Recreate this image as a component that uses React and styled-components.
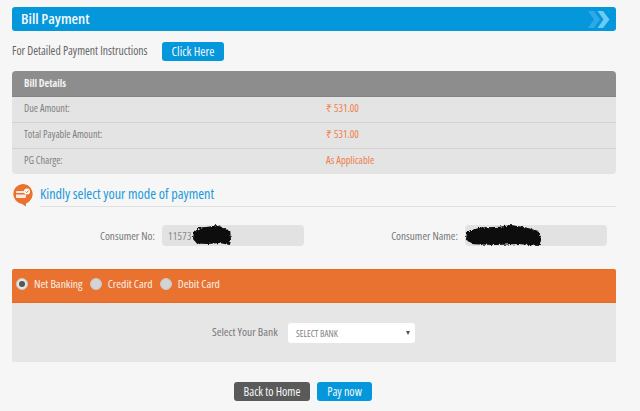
import React from 'react';
import styled, { createGlobalStyle } from 'styled-components';

const Global = createGlobalStyle`
  html, body { margin: 0; padding: 0; background: #f6f6f6; }
  body { font-family: "Open Sans", sans-serif; font-stretch: 75%; width: 640px; height: 411px; overflow: hidden; }
`;
const Page = styled.div`
  width: 604px; margin-left: 12px; padding-top: 7px; display: flex; flex-direction: column;
`;
const Banner = styled.header`
  height: 24px; background: #0497db; border-radius: 3px; display: flex; align-items: center;
  justify-content: space-between; padding: 0 6px 0 9px; color: #f3f8fb; box-sizing: border-box;
`;
const BannerTitle = styled.h1`
  margin: 0 0 2px; font-size: 15px; font-weight: 600; line-height: 20px;
`;
const InstructionRow = styled.div`
  display: flex; align-items: center; height: 19px; margin-top: 11px; font-size: 11.7px; color: #666;
`;
const InstructionText = styled.span`
  width: 150px; white-space: nowrap; padding-bottom: 3px;
`;
const ActionButton = styled.button`
  border: 0; margin: 0; padding: 0 0 1px; height: 19px; width: ${p => p.$w}px; border-radius: 3px;
  background: ${p => p.$dark ? '#5a5a5a' : '#0497db'}; color: #f6f8f9;
  font-family: "Open Sans", sans-serif; font-stretch: 75%; font-size: ${p => p.$fs || 12.5}px; font-weight: 500;
  text-align: center; white-space: nowrap;
`;
const DetailsCard = styled.section`
  margin-top: 10px; border-radius: 4px; overflow: hidden; background: #e4e4e4;
`;
const DetailsHead = styled.div`
  height: 26px; background: #8d8d8d; color: #f3f3f3; font-size: 10.3px; font-weight: 700;
  display: flex; align-items: center; padding: 0 0 2px 12px; border-bottom: 1px solid #838383; box-sizing: border-box;
`;
const DetailRow = styled.div`
  height: 26px; display: grid; grid-template-columns: 302px 1fr; align-items: center; padding: 0 0 3px 12px;
  font-size: 10.2px; color: #808080; box-sizing: border-box;
  &:not(:last-child) { border-bottom: 1px solid #d1d1d1; }
  &:last-child { height: 25px; }
`;
const DetailValue = styled.span`
  color: #ee8049; font-size: 10.6px;
`;
const Heading = styled.div`
  display: flex; align-items: flex-start; margin-top: 10px;
`;
const HeadingText = styled.h2`
  margin: 0 0 0 7px; flex: 1; height: 23px; box-sizing: border-box; border-bottom: 1px solid #e1e1e1;
  font-size: 14.2px; font-weight: 400; color: #1c9ad9; line-height: 19px;
`;
const ConsumerRow = styled.div`
  display: flex; align-items: center; margin-top: 18px; height: 21px;
`;
const FieldLabel = styled.label`
  width: ${p => p.$w}px; padding-right: 7px; box-sizing: border-box; text-align: right; font-size: 11.2px; color: #767676;
`;
const ReadField = styled.div`
  position: relative; width: 142px; height: 21px; background: #e2e2e2; border-radius: 4px;
  display: flex; align-items: center; padding-left: 6px; box-sizing: border-box; font-size: 10.5px; color: #888;
  letter-spacing: .3px;
`;
const Scribble = styled.svg`
  position: absolute; display: block; overflow: visible;
  left: ${p => p.$l}px; top: ${p => p.$t}px;
`;
const MethodBar = styled.div`
  margin-top: 23px; height: 34px; background: #e97230; border-top: 1px solid #ea6a1e; border-bottom: 1px solid #e76a20;
  box-sizing: border-box; display: flex; align-items: flex-start; padding: 6px 0 0 4px; color: #f9f1ea; font-size: 11.6px; font-weight: 500;
  border-radius: 2px 2px 0 0;
`;
const MethodOption = styled.span`
  display: inline-flex; align-items: center; margin-right: 7.200px; white-space: nowrap;
`;
const Radio = styled.span`
  width: 12px; height: 12px; border-radius: 50%; background: ${p => p.$on ? '#e4e4e4' : '#d4d4d4'}; border: 1px solid #c9c9c9;
  box-sizing: border-box; margin-right: 6px; display: flex; align-items: center; justify-content: center;
  &::after { content: ''; width: 6px; height: 6px; border-radius: 50%; background: ${p => p.$on ? '#555' : 'transparent'}; }
`;
const BankPanel = styled.div`
  height: 59px; background: #e6e6e6; display: flex; align-items: flex-start; padding: 20px 0 0 200px; box-sizing: border-box;
`;
const BankLabel = styled.span`
  font-size: 11.500px; color: #777; width: 76px; line-height: 18px; white-space: nowrap;
`;
const BankSelect = styled.div`
  width: 127px; height: 20px; background: #fff; border-radius: 3px; padding: 0 5px 0 8px; box-sizing: border-box;
  display: flex; align-items: center; justify-content: space-between; font-size: 9.300px; color: #818181;
`;
const Caret = styled.span`
  width: 0; height: 0; border-left: 2px solid transparent; border-right: 2px solid transparent; border-top: 4px solid #555;
`;
const Actions = styled.div`
  display: flex; gap: 7px; margin-top: 20px; padding-left: 222px;
`;

const Chevrons = () => (
  <svg width="22" height="17" viewBox="0 0 22 17">
    <path d="M0 0h6l6 8.500-6 8.500H0l6-8.500z" fill="#2fa9e6" />
    <path d="M9.500 0h5.500l6.500 8.500-6.500 8.500H9.500l6-8.500z" fill="#6ccbf5" />
  </svg>
);
const PayIcon = () => (
  <svg width="21" height="23" viewBox="0 0 21 23">
    <path d="M10.500 0a10 10 0 0 1 7 17.200c-.8.8-2.200 1.700-3.400 2.300l-.3 3-3.700-2.600a10 10 0 0 1 .4-19.900z" fill="#e97230" />
    <rect x="4" y="7" width="10" height="7" rx="1" fill="#fbe9dd" />
    <rect x="4" y="9" width="10" height="1.500" fill="#e97230" />
    <circle cx="15" cy="7.500" r="3" fill="#fff" />
    <path d="M13.500 7.500l1.200 1.200 1.800-2.200" stroke="#e97230" strokeWidth="1" fill="none" />
  </svg>
);
const Redaction = ({ w, h, l, t, id }) => (
  <Scribble $l={l} $t={t} width={w} height={h} viewBox={`0 0 ${w} ${h}`}>
    <filter id={id} x="-10%" y="-20%" width="120%" height="140%">
      <feTurbulence type="fractalNoise" baseFrequency="0.45" numOctaves="2" seed="4" />
      <feDisplacementMap in="SourceGraphic" scale="4" />
    </filter>
    <path filter={`url(#${id})`} d={`M1 ${h * .3}L${w * .2} ${h * .12}L${w * .45} ${h * .08}L${w * .6} 0L${w * .8} ${h * .12}L${w * .98} ${h * .3}L${w} ${h * .75}L${w * .97} ${h}L${w * .7} ${h * .9}L${w * .4} ${h * .95}L${w * .1} ${h * .92}L0 ${h * .7}z`} fill="#080808" />
  </Scribble>
);

export default function App() {
  return (
    <Page>
      <Global />
      <Banner>
        <BannerTitle>Bill Payment</BannerTitle>
        <Chevrons />
      </Banner>
      <InstructionRow>
        <InstructionText>For Detailed Payment Instructions</InstructionText>
        <ActionButton $w={62}>Click Here</ActionButton>
      </InstructionRow>
      <DetailsCard>
        <DetailsHead>Bill Details</DetailsHead>
        <DetailRow><span>Due Amount:</span><DetailValue>₹ 531.00</DetailValue></DetailRow>
        <DetailRow><span>Total Payable Amount:</span><DetailValue>₹ 531.00</DetailValue></DetailRow>
        <DetailRow><span>PG Charge:</span><DetailValue>As Applicable</DetailValue></DetailRow>
      </DetailsCard>
      <Heading>
        <PayIcon />
        <HeadingText>Kindly select your mode of payment</HeadingText>
      </Heading>
      <ConsumerRow>
        <FieldLabel $w={150}>Consumer No:</FieldLabel>
        <ReadField>11573<Redaction id="scribbleA" w={38} h={20} l={31} t={0} /></ReadField>
        <FieldLabel $w={161}>Consumer Name:</FieldLabel>
        <ReadField><Redaction id="scribbleB" w={75} h={21} l={1} t={0} /></ReadField>
      </ConsumerRow>
      <MethodBar>
        <MethodOption><Radio $on />Net Banking</MethodOption>
        <MethodOption><Radio />Credit Card</MethodOption>
        <MethodOption><Radio />Debit Card</MethodOption>
      </MethodBar>
      <BankPanel>
        <BankLabel>Select Your Bank</BankLabel>
        <BankSelect>SELECT BANK<Caret /></BankSelect>
      </BankPanel>
      <Actions>
        <ActionButton $w={76} $dark $fs={12}>Back to Home</ActionButton>
        <ActionButton $w={55} $fs={12}>Pay now</ActionButton>
      </Actions>
    </Page>
  );
}
